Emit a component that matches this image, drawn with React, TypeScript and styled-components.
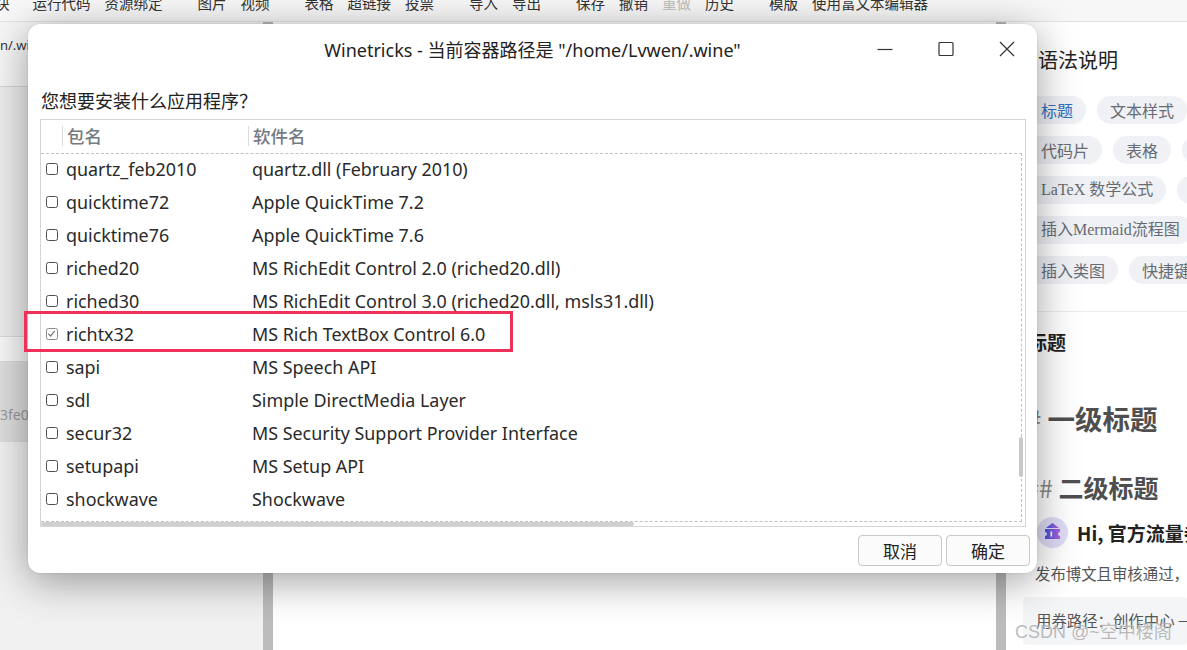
import React from 'react';
import styled, { createGlobalStyle } from 'styled-components';

const GlobalStyle = createGlobalStyle`
  html, body {
    margin: 0;
    padding: 0;
    background: #fff;
  }
  body {
    font-family: "Noto Sans", "Noto Sans CJK SC", sans-serif;
  }
  * { box-sizing: border-box; }
`;

const Root = styled.div`
  position: relative;
  width: 1187px;
  height: 650px;
  overflow: hidden;
  background: #fff;
`;

/* ---------- editor page behind the dialog ---------- */

const Editor = styled.div`
  display: flex;
  flex-direction: column;
  height: 100%;
`;

const Toolbar = styled.div`
  height: 22px;
  flex: none;
  display: flex;
  align-items: flex-start;
  gap: 35px;
  overflow: hidden;
  background: #f7f7f7;
  border-bottom: 1px solid #e2e2e2;
  font-family: "Noto Sans CJK SC", sans-serif;
  font-size: 14.5px;
  line-height: 20px;
  color: #333;
`;

const ToolGroup = styled.div<{ $shift?: number }>`
  display: flex;
  gap: 14px;
  margin-top: -7px;
  margin-left: ${p => p.$shift ?? 0}px;
  white-space: nowrap;
`;

const ToolItem = styled.span<{ $disabled?: boolean }>`
  color: ${p => (p.$disabled ? '#bdbdbd' : '#333')};
`;

const Workspace = styled.div`
  flex: 1;
  display: flex;
  min-height: 0;
`;

const SourcePane = styled.div`
  width: 263px;
  flex: none;
  display: flex;
  flex-direction: column;
  background: #f1f1f1;
`;

const PathRow = styled.div`
  height: 65px;
  padding-top: 14px;
  font-size: 13px;
  line-height: 18px;
  color: #333;
  white-space: nowrap;
  border-bottom: 1px solid #d6d6d6;
  background: #f6f6f6;
`;

const SourceBlock = styled.div<{ $h: number; $bg: string }>`
  height: ${p => p.$h}px;
  flex: none;
  background: ${p => p.$bg};
  border-bottom: 1px solid #d9d9d9;
  font-size: 14px;
  color: #999;
`;

const HashLine = styled.div`
  padding-top: 43px;
  line-height: 20px;
  white-space: nowrap;
`;

const PaneScroll = styled.div`
  width: 10px;
  flex: none;
  background: #bcbcbc;
`;

const PreviewPane = styled.div`
  flex: 1;
  background: #fff;
`;

const HelpPanel = styled.div`
  width: 181px;
  flex: none;
  padding-left: 22px;
  background: #fff;
  overflow: hidden;
  font-family: "Noto Sans CJK SC", sans-serif;
`;

const HelpTitle = styled.div`
  margin: 24px 0 0 10px;
  font-size: 20px;
  line-height: 28px;
  color: #222;
`;

const TagRows = styled.div`
  margin-top: 22px;
  display: flex;
  flex-direction: column;
  gap: 12px;
`;

const TagRow = styled.div`
  display: flex;
  gap: 11px;
  white-space: nowrap;
`;

const Tag = styled.span<{ $active?: boolean; $serif?: boolean }>`
  flex: none;
  height: 28px;
  padding: 0 13px;
  border-radius: 14px;
  background: #eff1f5;
  font-family: ${p =>
    p.$serif ? '"Liberation Serif", "Noto Sans CJK SC", serif' : '"Noto Sans CJK SC", sans-serif'};
  font-size: 16px;
  line-height: 28px;
  color: ${p => (p.$active ? '#2f6fbd' : '#676b74')};
`;

const HelpSection = styled.div`
  margin-top: 27px;
  border-top: 1px solid #ededed;
`;

const SectionTitle = styled.div`
  margin-top: 17px;
  font-size: 19px;
  font-weight: 700;
  line-height: 26px;
  color: #222;
`;

const SampleHeading = styled.div<{ $size: number; $top: number; $shift: number }>`
  margin-top: ${p => p.$top}px;
  margin-left: ${p => p.$shift}px;
  font-size: ${p => p.$size}px;
  font-weight: 700;
  line-height: 34px;
  color: #4f4f4f;
  white-space: nowrap;
`;

const HashMark = styled.span<{ $gap: number }>`
  font-weight: 400;
  color: #8a8a8a;
  margin-right: ${p => p.$gap}px;
`;

const Promo = styled.div`
  margin-top: 13px;
  margin-left: 9px;
  display: flex;
  align-items: center;
  gap: 9px;
  white-space: nowrap;
  svg { flex: none; }
`;

const PromoTitle = styled.span`
  font-size: 19px;
  font-weight: 700;
  color: #222;
`;

const PromoText = styled.div`
  margin-top: 14px;
  margin-left: 7px;
  font-size: 15.4px;
  line-height: 22px;
  color: #555;
  white-space: nowrap;
`;

const CouponBox = styled.div`
  margin-top: 13px;
  margin-left: -5px;
  height: 48px;
  padding: 12px 0 0 13px;
  background: #f4f5f7;
  border-radius: 4px;
  font-size: 15.4px;
  line-height: 22px;
  color: #555;
  white-space: nowrap;
`;

/* ---------- winetricks dialog ---------- */

const Dialog = styled.div`
  position: absolute;
  left: 28px;
  top: 24px;
  width: 1009px;
  height: 549px;
  display: flex;
  flex-direction: column;
  background: #fff;
  border-radius: 12px;
  box-shadow: 0 8px 42px rgba(0, 0, 0, 0.38), 0 0 2px rgba(0, 0, 0, 0.15);
  font-family: "Noto Sans", "Noto Sans CJK SC", sans-serif;
  color: #262626;
`;

const TitleBar = styled.div`
  height: 50px;
  flex: none;
  display: grid;
  grid-template-columns: 1fr auto 1fr;
  align-items: center;
`;

const Title = styled.div`
  grid-column: 2;
  font-size: 18px;
  color: #222;
  white-space: nowrap;
`;

const Controls = styled.div`
  grid-column: 3;
  justify-self: end;
  display: flex;
  height: 100%;
`;

const ControlButton = styled.div`
  width: 61px;
  display: flex;
  align-items: center;
  justify-content: center;
  color: #333;
`;

const Prompt = styled.div`
  margin: 15px 0 0 13px;
  font-size: 18px;
  line-height: 24px;
  color: #222;
`;

const ListBox = styled.div`
  position: relative;
  margin: 6px 11px 0 12px;
  height: 408px;
  flex: none;
  border: 1px solid #d5d5d5;
  display: flex;
  flex-direction: column;
  overflow: hidden;
`;

const Columns = '21px 186px 1fr';

const HeaderRow = styled.div`
  height: 32px;
  flex: none;
  display: grid;
  grid-template-columns: ${Columns};
  align-items: center;
  font-family: "Noto Sans CJK SC", sans-serif;
  font-size: 17.5px;
  font-weight: 500;
  color: #747a83;
`;

const HeaderCell = styled.div`
  height: 20px;
  padding-left: 4px;
  border-left: 1px solid #dcdcdc;
  line-height: 20px;
  white-space: nowrap;
`;

const ListBody = styled.div`
  position: relative;
  flex: 1;
  overflow: hidden;
`;

const FocusRing = styled.div`
  position: absolute;
  left: 0;
  top: 1px;
  right: 3px;
  bottom: 4px;
  border: 1px dashed #c2c2c2;
  border-left: none;
  pointer-events: none;
`;

const Row = styled.div`
  height: 33px;
  display: grid;
  grid-template-columns: ${Columns};
  align-items: center;
  font-size: 17.9px;
  color: #2a2a2a;
  white-space: nowrap;
`;

const CheckCell = styled.div`
  display: flex;
  justify-content: center;
`;

const Check = styled.span<{ $checked?: boolean }>`
  width: 12px;
  height: 12px;
  border: 1.3px solid ${p => (p.$checked ? '#8a8a8a' : '#4f4f4f')};
  border-radius: 2.5px;
  display: flex;
  align-items: center;
  justify-content: center;
  background: #fff;
`;

const Cell = styled.div`
  padding-left: 4px;
  overflow: hidden;
`;

const VThumb = styled.div`
  position: absolute;
  right: 2px;
  top: 285px;
  width: 4px;
  height: 40px;
  border-radius: 2px;
  background: #c9c9c9;
`;

const HThumb = styled.div`
  position: absolute;
  left: 0;
  bottom: 0;
  width: 593px;
  height: 4px;
  border-radius: 2px;
  background: #d0d0d0;
`;

const Footer = styled.div`
  margin-top: 8px;
  padding-right: 7px;
  display: flex;
  justify-content: flex-end;
  gap: 4px;
`;

const Button = styled.button`
  width: 84px;
  height: 31px;
  border: 1px solid #c9c9c9;
  border-radius: 4px;
  background: #fbfbfb;
  font-family: "Noto Sans CJK SC", sans-serif;
  font-size: 17px;
  color: #222;
  padding: 0;
`;

/* ---------- annotations ---------- */

const Highlight = styled.div`
  position: absolute;
  left: 24px;
  top: 311px;
  width: 489px;
  height: 41px;
  border: 3px solid #ef3159;
  pointer-events: none;
`;

const Watermark = styled.div`
  position: absolute;
  left: 1015px;
  top: 620px;
  font-family: "Liberation Sans", "Noto Sans CJK SC", sans-serif;
  font-size: 18px;
  line-height: 24px;
  color: rgba(140, 140, 140, 0.6);
  text-shadow: 0 0 1px rgba(255, 255, 255, 0.8);
  white-space: nowrap;
`;

const toolGroups: { items: string[]; shift?: number }[] = [
  { items: ['代码块'], shift: -34 },
  { items: ['运行代码', '资源绑定'], shift: -12 },
  { items: ['图片', '视频'] },
  { items: ['表格', '超链接', '投票'] },
  { items: ['导入', '导出'] },
  { items: ['保存', '撤销', '重做', '历史'] },
  { items: ['模版', '使用富文本编辑器'] },
];

const packages = [
  ['quartz_feb2010', 'quartz.dll (February 2010)'],
  ['quicktime72', 'Apple QuickTime 7.2'],
  ['quicktime76', 'Apple QuickTime 7.6'],
  ['riched20', 'MS RichEdit Control 2.0 (riched20.dll)'],
  ['riched30', 'MS RichEdit Control 3.0 (riched20.dll, msls31.dll)'],
  ['richtx32', 'MS Rich TextBox Control 6.0'],
  ['sapi', 'MS Speech API'],
  ['sdl', 'Simple DirectMedia Layer'],
  ['secur32', 'MS Security Support Provider Interface'],
  ['setupapi', 'MS Setup API'],
  ['shockwave', 'Shockwave'],
  ['speechsdk', 'MS Speech SDK 5.1'],
];

function CouponIcon() {
  return (
    <svg width="31" height="31" viewBox="0 0 31 31">
      <defs>
        <linearGradient id="cpn" x1="0" y1="0" x2="1" y2="0">
          <stop offset="0" stopColor="#3f55d8" />
          <stop offset="1" stopColor="#b45fdc" />
        </linearGradient>
      </defs>
      <circle cx="15.5" cy="15.5" r="15.5" fill="#dfdcf6" />
      <path d="M15.5 6 L22 11 H9 Z" fill="url(#cpn)" />
      <path
        d="M8 12 H23 V15 A2 2 0 0 0 23 19 V22 H8 V19 A2 2 0 0 0 8 15 Z"
        fill="url(#cpn)"
      />
      <rect x="13.5" y="14.5" width="1.6" height="5" fill="#fff" />
    </svg>
  );
}

export default function App() {
  return (
    <Root>
      <GlobalStyle />
      <Editor>
        <Toolbar>
          {toolGroups.map((g, i) => (
            <ToolGroup key={i} $shift={g.shift}>
              {g.items.map(t => (
                <ToolItem key={t} $disabled={t === '重做'}>
                  {t}
                </ToolItem>
              ))}
            </ToolGroup>
          ))}
        </Toolbar>
        <Workspace>
          <SourcePane>
            <PathRow>n/.wine</PathRow>
            <SourceBlock $h={250} $bg="#ededed" />
            <SourceBlock $h={25} $bg="#f7f7f7" />
            <SourceBlock $h={80} $bg="#dedede">
              <HashLine>3fe0a1c9</HashLine>
            </SourceBlock>
          </SourcePane>
          <PaneScroll />
          <PreviewPane />
          <PaneScroll />
          <HelpPanel>
            <HelpTitle>语法说明</HelpTitle>
            <TagRows>
              <TagRow>
                <Tag $active>标题</Tag>
                <Tag>文本样式</Tag>
              </TagRow>
              <TagRow>
                <Tag>代码片</Tag>
                <Tag>表格</Tag>
                <Tag>注脚</Tag>
              </TagRow>
              <TagRow>
                <Tag $serif>LaTeX 数学公式</Tag>
                <Tag>目录</Tag>
              </TagRow>
              <TagRow>
                <Tag $serif>插入Mermaid流程图</Tag>
              </TagRow>
              <TagRow>
                <Tag>插入类图</Tag>
                <Tag>快捷键</Tag>
              </TagRow>
            </TagRows>
            <HelpSection>
              <SectionTitle>标题</SectionTitle>
              <SampleHeading $size={27.5} $top={46} $shift={-2}>
                <HashMark $gap={0}>#</HashMark> 一级标题
              </SampleHeading>
              <SampleHeading $size={25} $top={35} $shift={-3}>
                <HashMark $gap={0}>##</HashMark> 二级标题
              </SampleHeading>
              <Promo>
                <CouponIcon />
                <PromoTitle>Hi, 官方流量券</PromoTitle>
              </Promo>
              <PromoText>发布博文且审核通过，</PromoText>
              <CouponBox>用券路径：创作中心 → 流量券</CouponBox>
            </HelpSection>
          </HelpPanel>
        </Workspace>
      </Editor>

      <Dialog>
        <TitleBar>
          <Title>Winetricks - 当前容器路径是 "/home/Lvwen/.wine"</Title>
          <Controls>
            <ControlButton>
              <svg width="16" height="16" viewBox="0 0 16 16">
                <path d="M0.5 8.5 H15.5" stroke="#333" strokeWidth="1.2" />
              </svg>
            </ControlButton>
            <ControlButton>
              <svg width="16" height="16" viewBox="0 0 16 16">
                <rect x="1" y="1.5" width="14" height="13" rx="1" fill="none" stroke="#333" strokeWidth="1.2" />
              </svg>
            </ControlButton>
            <ControlButton>
              <svg width="16" height="16" viewBox="0 0 16 16">
                <path d="M1 1 L15 15 M15 1 L1 15" stroke="#333" strokeWidth="1.2" />
              </svg>
            </ControlButton>
          </Controls>
        </TitleBar>
        <Prompt>您想要安装什么应用程序？</Prompt>
        <ListBox>
          <HeaderRow>
            <div />
            <HeaderCell>包名</HeaderCell>
            <HeaderCell>软件名</HeaderCell>
          </HeaderRow>
          <ListBody>
            {packages.map(([name, desc]) => {
              const checked = name === 'richtx32';
              return (
                <Row key={name}>
                  <CheckCell>
                    <Check $checked={checked}>
                      {checked && (
                        <svg width="9" height="9" viewBox="0 0 9 9">
                          <path d="M1.2 4.6 L3.6 7 L7.8 1.8" fill="none" stroke="#777" strokeWidth="1.2" />
                        </svg>
                      )}
                    </Check>
                  </CheckCell>
                  <Cell>{name}</Cell>
                  <Cell>{desc}</Cell>
                </Row>
              );
            })}
            <FocusRing />
            <VThumb />
            <HThumb />
          </ListBody>
        </ListBox>
        <Footer>
          <Button>取消</Button>
          <Button>确定</Button>
        </Footer>
      </Dialog>

      <Highlight />
      <Watermark>CSDN @~空中楼阁</Watermark>
    </Root>
  );
}
